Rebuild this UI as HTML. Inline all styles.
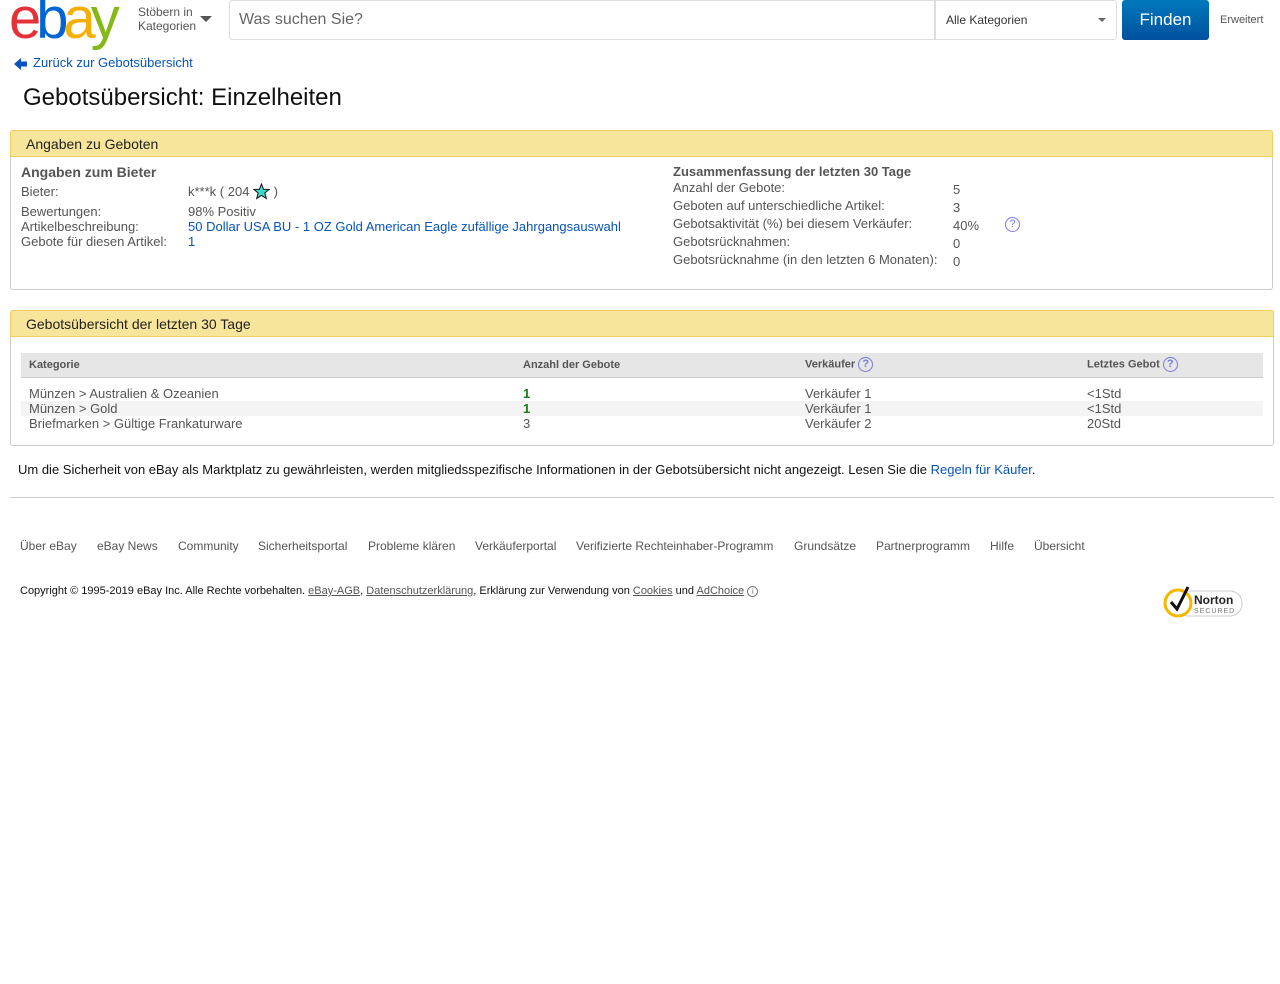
<!DOCTYPE html>
<html><head><meta charset="utf-8"><style>
*{margin:0;padding:0;box-sizing:border-box}
body{width:1280px;height:984px;background:#fff;font-family:"Liberation Sans",Arial,sans-serif;color:#333;position:relative;overflow:hidden}
.a{position:absolute;white-space:nowrap}
a{color:#0654ba;text-decoration:none}
.g{color:#555;font-size:13px}
.box{position:absolute;border:1px solid #ccc;border-radius:3px}
.hd{position:absolute;left:-1px;right:-1px;top:-1px;height:27px;background:#f7e59b;border:1px solid #f0cf5e;border-radius:3px 3px 0 0;font-size:14px;color:#222;padding:5px 15px}
.q{display:inline-block;width:15px;height:15px;border:1px solid #7a7ae0;border-radius:50%;color:#7a7ae0;font-size:11px;text-align:center;line-height:13px;vertical-align:middle}
.f{font-size:12px;color:#555}
</style></head><body>
<div class="a" style="left:9px;top:-14px;font-size:58px;letter-spacing:-5px;line-height:66px"><span style="color:#e53238">e</span><span style="color:#0064d2">b</span><span style="color:#f5af02">a</span><span style="color:#86b817">y</span></div>
<div class="a" style="left:138px;top:5px;font-size:12px;color:#555;line-height:14px">Stöbern in<br>Kategorien</div>
<div class="a" style="left:200px;top:16px;width:0;height:0;border-left:6px solid transparent;border-right:6px solid transparent;border-top:6px solid #555"></div>
<div class="a" style="left:229px;top:0;width:706px;height:40px;border:1px solid #ddd;border-radius:3px 0 0 3px;font-size:16px;color:#666;padding:10px 9px">Was suchen Sie?</div>
<div class="a" style="left:935px;top:0;width:182px;height:40px;border:1px solid #ddd;border-radius:0 3px 3px 0;font-size:12px;color:#333;padding:12px 10px">Alle Kategorien</div>
<div class="a" style="left:1098px;top:18px;border-left:4px solid transparent;border-right:4px solid transparent;border-top:4px solid #666"></div>
<div class="a" style="left:1122px;top:0;width:87px;height:40px;border-radius:3px;background:linear-gradient(#0079bc,#00519e);color:#fff;font-size:17px;text-align:center;line-height:39px">Finden</div>
<div class="a" style="left:1220px;top:14px;font-size:11px;color:#555">Erweitert</div>
<div class="a" style="left:14px;top:57px;width:14px;height:14px"><svg width="14" height="14"><path d="M0 7 L7 1 V4.5 H13 V9.5 H7 V13 Z" fill="#0654ba"/></svg></div>
<div class="a" style="left:33px;top:55px;font-size:13px"><a>Zurück zur Gebotsübersicht</a></div>
<div class="a" style="left:23px;top:84px;font-size:24px;color:#111">Gebotsübersicht: Einzelheiten</div>

<div class="box" style="left:10px;top:130px;width:1263px;height:160px">
<div class="hd">Angaben zu Geboten</div>
</div>
<div class="a" style="left:21px;top:164px;font-size:14px;font-weight:bold;color:#555">Angaben zum Bieter</div>
<div class="a g" style="left:21px;top:184px">Bieter:</div>
<div class="a g" style="left:188px;top:183px">k***k ( 204 <svg width="17" height="17" style="vertical-align:-4px"><path d="M8.5 1 L10.6 6.3 16 6.5 11.8 10 13.3 15.5 8.5 12.4 3.7 15.5 5.2 10 1 6.5 6.4 6.3Z" fill="#3dd9c8" stroke="#111" stroke-width="1"/></svg> )</div>
<div class="a g" style="left:21px;top:204px">Bewertungen:</div>
<div class="a g" style="left:188px;top:204px">98% Positiv</div>
<div class="a g" style="left:21px;top:219px">Artikelbeschreibung:</div>
<div class="a" style="left:188px;top:219px;font-size:13px"><a>50 Dollar USA BU - 1 OZ Gold American Eagle zufällige Jahrgangsauswahl</a></div>
<div class="a g" style="left:21px;top:234px">Gebote für diesen Artikel:</div>
<div class="a" style="left:188px;top:234px;font-size:13px;color:#0654ba">1</div>

<div class="a" style="left:673px;top:164px;font-size:13px;font-weight:bold;color:#555">Zusammenfassung der letzten 30 Tage</div>
<div class="a g" style="left:673px;top:180px">Anzahl der Gebote:</div><div class="a g" style="left:953px;top:182px">5</div>
<div class="a g" style="left:673px;top:198px">Geboten auf unterschiedliche Artikel:</div><div class="a g" style="left:953px;top:200px">3</div>
<div class="a g" style="left:673px;top:216px">Gebotsaktivität (%) bei diesem Verkäufer:</div><div class="a g" style="left:953px;top:218px">40%</div>
<div class="a" style="left:1005px;top:216px"><span class="q">?</span></div>
<div class="a g" style="left:673px;top:234px">Gebotsrücknahmen:</div><div class="a g" style="left:953px;top:236px">0</div>
<div class="a g" style="left:673px;top:252px">Gebotsrücknahme (in den letzten 6 Monaten):</div><div class="a g" style="left:953px;top:254px">0</div>

<div class="box" style="left:10px;top:310px;width:1264px;height:136px">
<div class="hd">Gebotsübersicht der letzten 30 Tage</div>
</div>
<div class="a" style="left:21px;top:353px;width:1242px;height:25px;background:#e6e6e6;border-bottom:1px solid #ccc"></div>
<div class="a" style="left:29px;top:359px;font-size:11px;font-weight:bold;color:#555">Kategorie</div>
<div class="a" style="left:523px;top:359px;font-size:11px;font-weight:bold;color:#555">Anzahl der Gebote</div>
<div class="a" style="left:805px;top:357px;font-size:11px;font-weight:bold;color:#555">Verkäufer <span class="q">?</span></div>
<div class="a" style="left:1087px;top:357px;font-size:11px;font-weight:bold;color:#555">Letztes Gebot <span class="q">?</span></div>
<div class="a" style="left:21px;top:401px;width:1242px;height:15px;background:#f4f4f4"></div>
<div class="a g" style="left:29px;top:386px">Münzen &gt; Australien &amp; Ozeanien</div>
<div class="a g" style="left:29px;top:401px">Münzen &gt; Gold</div>
<div class="a g" style="left:29px;top:416px">Briefmarken &gt; Gültige Frankaturware</div>
<div class="a" style="left:523px;top:386px;font-size:13px;font-weight:bold;color:#1a7a1a">1</div>
<div class="a" style="left:523px;top:401px;font-size:13px;font-weight:bold;color:#1a7a1a">1</div>
<div class="a g" style="left:523px;top:416px">3</div>
<div class="a g" style="left:805px;top:386px">Verkäufer 1</div>
<div class="a g" style="left:805px;top:401px">Verkäufer 1</div>
<div class="a g" style="left:805px;top:416px">Verkäufer 2</div>
<div class="a g" style="left:1087px;top:386px">&lt;1Std</div>
<div class="a g" style="left:1087px;top:401px">&lt;1Std</div>
<div class="a g" style="left:1087px;top:416px">20Std</div>

<div class="a" style="left:18px;top:462px;font-size:13px;color:#111">Um die Sicherheit von eBay als Marktplatz zu gewährleisten, werden mitgliedsspezifische Informationen in der Gebotsübersicht nicht angezeigt. Lesen Sie die <a>Regeln für Käufer</a>.</div>
<div class="a" style="left:10px;top:497px;width:1264px;height:1px;background:#ccc"></div>

<div class="a f" style="left:20px;top:539px">Über eBay</div>
<div class="a f" style="left:97px;top:539px">eBay News</div>
<div class="a f" style="left:178px;top:539px">Community</div>
<div class="a f" style="left:258px;top:539px">Sicherheitsportal</div>
<div class="a f" style="left:368px;top:539px">Probleme klären</div>
<div class="a f" style="left:475px;top:539px">Verkäuferportal</div>
<div class="a f" style="left:576px;top:539px">Verifizierte Rechteinhaber-Programm</div>
<div class="a f" style="left:794px;top:539px">Grundsätze</div>
<div class="a f" style="left:876px;top:539px">Partnerprogramm</div>
<div class="a f" style="left:990px;top:539px">Hilfe</div>
<div class="a f" style="left:1034px;top:539px">Übersicht</div>
<div class="a" style="left:20px;top:585px;font-size:11px;color:#111">Copyright © 1995-2019 eBay Inc. Alle Rechte vorbehalten. <u style="color:#555">eBay-AGB</u>, <u style="color:#555">Datenschutzerklärung</u>, Erklärung zur Verwendung von <u style="color:#555">Cookies</u> und <u style="color:#555">AdChoice</u> <span style="display:inline-block;width:11px;height:11px;border:1px solid #777;border-radius:50%;font-size:8px;text-align:center;line-height:9px;color:#777">i</span></div>
<div class="a" style="left:1162px;top:585px"><svg width="82" height="34"><rect x="14" y="6" width="66" height="25" rx="12" fill="#fff" stroke="#ccc"/><circle cx="16" cy="18" r="13" fill="#fff" stroke="#f5b800" stroke-width="3"/><path d="M9 17 L15 24 L26 2" fill="none" stroke="#111" stroke-width="3"/><text x="32" y="19" font-size="12" font-weight="bold" fill="#222" font-family="Liberation Sans">Norton</text><text x="32" y="28" font-size="7" fill="#777" font-family="Liberation Sans" letter-spacing="1">SECURED</text></svg></div>
</body></html>
